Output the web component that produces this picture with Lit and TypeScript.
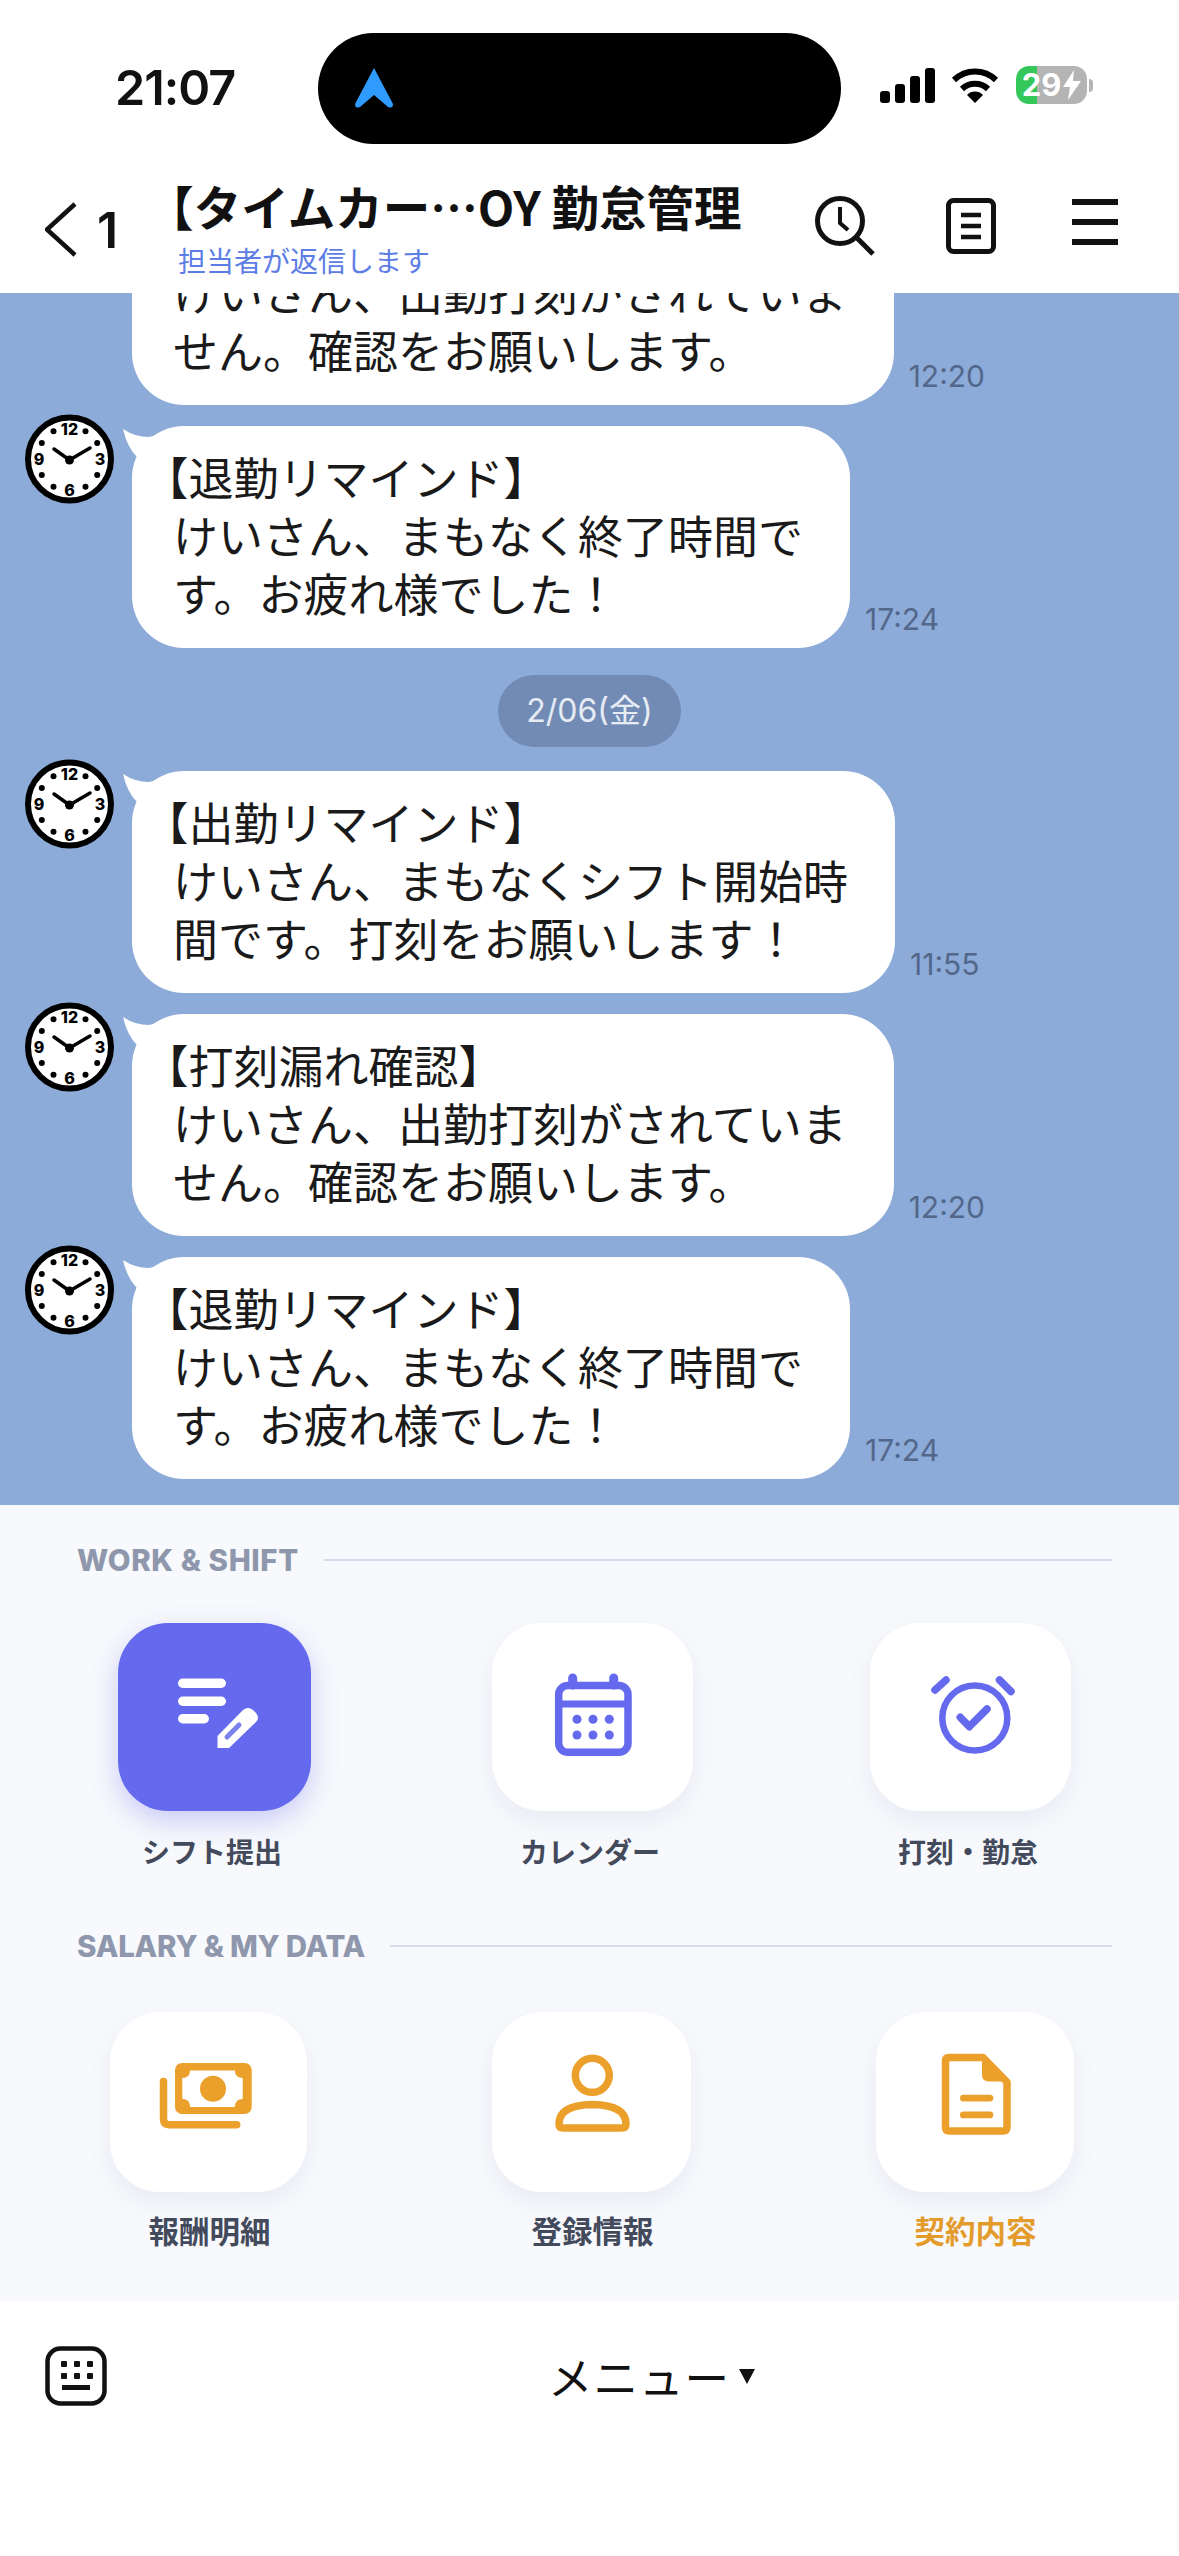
import { LitElement, html, svg, css } from "lit";
import { customElement } from "lit/decorators.js";

interface Message {
  lines: string[];
  time: string;
}

// the oldest message has scrolled under the nav bar, only its tail end is still on screen
const lateScrolled: Message = {
  lines: ["けいさん、出勤打刻がされていま", "せん。確認をお願いします。"],
  time: "12:20",
};
const late: Message = {
  lines: ["【打刻漏れ確認】", "けいさん、出勤打刻がされていま", "せん。確認をお願いします。"],
  time: "12:20",
};
const leave: Message = {
  lines: ["【退勤リマインド】", "けいさん、まもなく終了時間で", "す。お疲れ様でした！"],
  time: "17:24",
};
const start: Message = {
  lines: ["【出勤リマインド】", "けいさん、まもなくシフト開始時", "間です。打刻をお願いします！"],
  time: "11:55",
};

// icons are drawn in tile coordinates, so each one sits where the tile expects it
const shiftIcon = svg`
  <rect x="60" y="55.500" width="48" height="9.500" rx="4.700" fill="#fff" />
  <rect x="60" y="73.500" width="48" height="9.500" rx="4.700" fill="#fff" />
  <rect x="60" y="91" width="31" height="9.500" rx="4.700" fill="#fff" />
  <path d="M99.500 125 V113 L125 87 Q130 83 135 87 L138 90 Q142 95 138 99 L111 125 Z" fill="#fff" />
  <path d="M109 114 L121 102" stroke="#7d82ef" stroke-width="5" stroke-linecap="round" />`;

const calendarIcon = svg`
  <g fill="none" stroke="#6469ee">
    <rect x="66.700" y="62.500" width="69.300" height="66.800" rx="9" stroke-width="7.500" />
    <path d="M80.700 55 V62 M121.700 55 V62" stroke-width="9" stroke-linecap="round" />
    <path d="M67 81 H136" stroke-width="7" />
  </g>
  <g fill="#6469ee">
    ${[85, 101, 117.3].map(
      (x) => svg`<circle cx=${x} cy="96.300" r="4.500" /><circle cx=${x} cy="112" r="4.500" />`
    )}
  </g>`;

const alarmIcon = svg`
  <g fill="none" stroke="#6469ee" stroke-linecap="round" stroke-linejoin="round">
    <circle cx="104.800" cy="95" r="32.500" stroke-width="6.500" />
    <path d="M65 67 L76 57 M129.500 57 L141 68.500" stroke-width="7.500" />
    <path d="M90.300 94.300 L99.300 103.700 L117 86" stroke-width="7.500" />
  </g>`;

const moneyIcon = svg`
  <rect x="65" y="51" width="76.700" height="51" rx="7" fill="#eca02c" />
  <path d="M80 58.500 H125 Q125 66 132.700 66 V87 Q125 87 125 95 H80 Q80 87 72.300 87 V66 Q80 66 80 58.500 Z" fill="#fff" />
  <circle cx="103" cy="76.700" r="13" fill="#eca02c" />
  <path d="M53.500 69.500 V107 Q53.500 112.700 59 112.700 H126.700" fill="none" stroke="#eca02c" stroke-width="7.500" stroke-linecap="round" />`;

const personIcon = svg`
  <g fill="none" stroke="#eca02c" stroke-width="7.500" stroke-linejoin="round">
    <circle cx="100.300" cy="63.300" r="17" />
    <path d="M71 116 H130 Q134 116 134 112 Q134 93 100.300 92.500 Q67 93 67 112 Q67 116 71 116 Z" />
  </g>`;

const docIcon = svg`
  <path d="M73 45.500 H107 L131 70 V115 Q131 119 127 119 H73 Q69.500 119 69.500 115 V49 Q69.500 45.500 73 45.500 Z"
    fill="none" stroke="#eca02c" stroke-width="7.500" stroke-linejoin="round" />
  <path d="M106 44 H109 L132 68 V69.500 H113 Q106 69.500 106 62.500 Z" fill="#eca02c" />
  <rect x="84" y="82.700" width="33.300" height="6.800" rx="3.400" fill="#eca02c" />
  <rect x="84" y="99.500" width="33.300" height="6.800" rx="3.400" fill="#eca02c" />`;

interface Tile {
  label: string;
  icon: unknown;
  width: string;
  active?: boolean;
  accent?: boolean;
}

const workTiles: Tile[] = [
  { label: "シフト提出", icon: shiftIcon, width: "w193", active: true },
  { label: "カレンダー", icon: calendarIcon, width: "w201" },
  { label: "打刻・勤怠", icon: alarmIcon, width: "w201" },
];

const dataTiles: Tile[] = [
  { label: "報酬明細", icon: moneyIcon, width: "w197" },
  { label: "登録情報", icon: personIcon, width: "w199" },
  { label: "契約内容", icon: docIcon, width: "w198", accent: true },
];

@customElement("app-root")
export class AppRoot extends LitElement {
  static styles = css`
    :host {
      display: block;
      width: 1179px;
      height: 2556px;
      overflow: hidden;
      background: #fff;
      font-family: "Noto Sans CJK JP", "Noto Sans", sans-serif;
      color: #111;
    }

    svg {
      display: block;
      flex-shrink: 0;
    }

    .page {
      display: flex;
      flex-direction: column;
      height: 2556px;
    }

    /* status bar */
    .status {
      display: flex;
      align-items: flex-start;
      height: 144px;
      padding-top: 33px;
      box-sizing: border-box;
      flex-shrink: 0;
    }
    .clock {
      width: 318px;
      padding: 24px 0 0 115px;
      box-sizing: border-box;
      font-family: Inter, sans-serif;
      font-weight: 600;
      font-size: 48.5px;
      line-height: 62px;
      letter-spacing: -1px;
    }
    .island {
      display: flex;
      align-items: center;
      width: 523px;
      height: 111px;
      padding-left: 37px;
      box-sizing: border-box;
      border-radius: 56px;
      background: #000;
    }
    .indicators {
      display: flex;
      align-items: center;
      margin-left: 39px;
      height: 111px;
      padding-bottom: 7px;
      box-sizing: border-box;
    }
    .wifi {
      margin-left: 16px;
    }
    .battery {
      display: flex;
      align-items: center;
      justify-content: center;
      gap: 2px;
      width: 71px;
      height: 38px;
      margin-left: 17px;
      border-radius: 13px;
      background: linear-gradient(90deg, #35c759 30%, #b4b4b4 30%);
      color: #fff;
      font-family: Inter, sans-serif;
      font-weight: 700;
      font-size: 31px;
      line-height: 38px;
    }
    .nub {
      width: 4px;
      height: 13px;
      margin-left: 2px;
      border-radius: 0 4px 4px 0;
      background: #b4b4b4;
    }

    /* nav bar */
    .nav {
      display: flex;
      align-items: flex-start;
      height: 149px;
      flex-shrink: 0;
      padding-left: 45px;
      box-sizing: border-box;
      position: relative;
      z-index: 1;
      background: #fff;
    }
    .back {
      margin-top: 58px;
    }
    .count {
      width: 73px;
      margin-left: 20px;
      margin-top: 58px;
      font-family: Inter, sans-serif;
      font-weight: 600;
      font-size: 50px;
      line-height: 56px;
    }
    .heading {
      width: 640px;
      padding-top: 30px;
    }
    .title {
      font-weight: 700;
      font-size: 47.5px;
      line-height: 64px;
      white-space: nowrap;
    }
    .half {
      font-feature-settings: "halt";
    }
    .sub {
      margin: 2px 0 0 8px;
      color: #5d7de6;
      font-size: 28px;
      line-height: 40px;
    }
    .search {
      margin-top: 52px;
      margin-left: 5px;
    }
    .doc {
      margin-top: 54px;
      margin-left: 71px;
    }
    .menu {
      margin-top: 55px;
      margin-left: 76px;
    }

    /* chat */
    .chat {
      display: flex;
      flex-direction: column;
      justify-content: flex-end;
      gap: 21px;
      height: 1212px;
      flex-shrink: 0;
      overflow: hidden;
      padding: 0 0 26px 25px;
      box-sizing: border-box;
      background: #8cabd9;
    }
    .row {
      display: flex;
      align-items: flex-start;
      flex-shrink: 0;
    }
    .avatar {
      margin-top: -12px;
    }
    .spacer {
      width: 90px;
      flex-shrink: 0;
    }
    .bubble {
      position: relative;
      margin-left: 17px;
      padding: 22px 47px 26px 41px;
      border-radius: 52px;
      background: #fff;
      color: #1a1a1a;
      font-size: 45px;
      line-height: 58px;
      white-space: nowrap;
    }
    .bubble .half {
      margin-left: -7px;
    }
    .tail {
      position: absolute;
      left: -9px;
      top: 3px;
    }
    .time {
      align-self: flex-end;
      margin: 0 0 14px 15px;
      color: #53678a;
      font-family: Inter, sans-serif;
      font-size: 30px;
      line-height: 30px;
    }
    .date {
      align-self: center;
      margin: 6px 25px 3px 0;
      padding: 0 28px;
      height: 72px;
      border-radius: 36px;
      background: #718bb4;
      color: #e6ebf4;
      font-family: Inter, "Noto Sans CJK JP", sans-serif;
      font-size: 32px;
      line-height: 72px;
    }

    /* rich menu */
    .panel {
      height: 796px;
      flex-shrink: 0;
      padding-top: 40px;
      box-sizing: border-box;
      background: #f8f9fc;
    }
    .section {
      display: flex;
      align-items: center;
      gap: 25px;
      height: 30px;
      padding: 0 67px 0 77px;
      color: #8f97ad;
      font-family: Inter, sans-serif;
      font-weight: 800;
      font-size: 29.500px;
      line-height: 30px;
      letter-spacing: 0.6px;
      white-space: nowrap;
    }
    .section.second {
      margin-top: 60px;
      letter-spacing: -0.2px;
    }
    .rule {
      flex: 1;
      height: 2px;
      background: #d9dcea;
    }
    .tiles {
      display: grid;
      justify-items: center;
    }
    .tiles.work {
      grid-template-columns: repeat(3, 378px);
      margin-top: 48px;
      padding-left: 25px;
    }
    .tiles.data {
      grid-template-columns: repeat(3, 383px);
      margin-top: 51px;
      padding-left: 17px;
    }
    .item {
      display: flex;
      flex-direction: column;
      align-items: center;
    }
    .tile {
      border-radius: 50px;
      background: #fff;
      box-shadow: 0 10px 26px rgba(92, 100, 170, 0.09);
    }
    .work .tile {
      height: 188px;
    }
    .data .tile {
      height: 180px;
    }
    .tile.on {
      background: #6469ee;
      box-shadow: 0 10px 28px rgba(100, 105, 238, 0.32);
    }
    .w193 {
      width: 193px;
    }
    .w197 {
      width: 197px;
    }
    .w198 {
      width: 198px;
    }
    .w199 {
      width: 199px;
    }
    .w201 {
      width: 201px;
    }
    .label {
      color: #434a5c;
      font-weight: 700;
      line-height: 40px;
      white-space: nowrap;
    }
    .work .label {
      margin-top: 20px;
      padding-right: 4px;
      font-size: 28px;
    }
    .data .label {
      margin-top: 18px;
      padding-left: 2px;
      font-size: 30.500px;
    }
    .label.accent {
      color: #e39b2c;
    }

    /* bottom bar */
    .bar {
      display: flex;
      align-items: center;
      height: 60px;
      margin-top: 45px;
      padding-left: 45px;
    }
    .switch {
      display: flex;
      align-items: center;
      margin-left: 441px;
      font-size: 44.500px;
      line-height: 60px;
      letter-spacing: 1px;
    }
    .caret {
      width: 0;
      height: 0;
      margin-left: 9px;
      border-left: 8.500px solid transparent;
      border-right: 8.500px solid transparent;
      border-top: 15px solid #111;
    }
  `;

  private renderLine(line: string) {
    if (line.startsWith("【")) {
      return html`<div><span class="half">【</span>${line.slice(1)}</div>`;
    }
    return html`<div>${line}</div>`;
  }

  private renderAvatar() {
    const dots = [30, 60, 120, 150, 210, 240, 300, 330];
    return html`<svg class="avatar" width="90" height="90" viewBox="0 0 90 90">
      <circle cx="44.500" cy="45" r="41.500" fill="#fff" stroke="#000" stroke-width="6" />
      ${dots.map((a) => {
        const r = (a * Math.PI) / 180;
        return svg`<circle cx=${44.5 + 32 * Math.sin(r)} cy=${45 - 32 * Math.cos(r)} r="3" fill="#000" />`;
      })}
      <g font-family="Inter, sans-serif" font-weight="800" font-size="16" fill="#000" text-anchor="middle">
        <text x="44.500" y="21">12</text>
        <text x="75" y="51">3</text>
        <text x="44.500" y="82">6</text>
        <text x="14" y="51">9</text>
      </g>
      <path d="M29 35 L44.500 46 L65 34" fill="none" stroke="#000" stroke-width="3.500" stroke-linecap="round" stroke-linejoin="round" />
      <circle cx="44.500" cy="46" r="4.500" fill="#000" />
    </svg>`;
  }

  private renderMessage(m: Message, scrolled = false) {
    return html`<div class="row">
      ${scrolled ? html`<div class="spacer"></div>` : this.renderAvatar()}
      <div class="bubble">
        ${scrolled
          ? ""
          : html`<svg class="tail" width="34" height="30" viewBox="0 0 34 30">
              <path d="M0 0 Q12 8 26 8 L34 6 L14 28 Q4 18 0 0 Z" fill="#fff" />
            </svg>`}
        ${m.lines.map((l) => this.renderLine(l))}
      </div>
      <span class="time">${m.time}</span>
    </div>`;
  }

  private renderTile(t: Tile, height: number) {
    return html`<div class="item">
      <div class="tile ${t.width} ${t.active ? "on" : ""}">
        <svg width="100%" height=${height} viewBox="0 0 ${t.width.slice(1)} ${height}">${t.icon}</svg>
      </div>
      <div class="label ${t.accent ? "accent" : ""}">${t.label}</div>
    </div>`;
  }

  render() {
    return html`<div class="page">
      <div class="status">
        <div class="clock">21:07</div>
        <div class="island">
          <svg width="38" height="41" viewBox="0 0 38 41">
            <path d="M19 0 L38 36 Q38 41 33 39 L19 27 L5 39 Q0 41 0 36 Z" fill="#2f9bff" />
          </svg>
        </div>
        <div class="indicators">
          <svg width="55" height="35" viewBox="0 0 55 35" fill="#000">
            <rect x="0" y="23" width="10" height="12" rx="3" />
            <rect x="15" y="16" width="10" height="19" rx="3" />
            <rect x="30" y="8" width="10" height="27" rx="3" />
            <rect x="45" y="0" width="10" height="35" rx="3" />
          </svg>
          <svg class="wifi" width="48" height="35" viewBox="0 0 48 35" fill="none" stroke="#000" stroke-width="6">
            <path d="M3 12 A30 30 0 0 1 45 12" />
            <path d="M11 21 A19 19 0 0 1 37 21" />
            <path d="M24 35 L16 27 A11 11 0 0 1 32 27 Z" fill="#000" stroke="none" />
          </svg>
          <div class="battery">
            <span>29</span>
            <svg width="18" height="30" viewBox="0 0 18 30">
              <path d="M11 0 L0 17 H7 L5 30 L18 11 H10 Z" fill="#fff" />
            </svg>
          </div>
          <div class="nub"></div>
        </div>
      </div>

      <div class="nav">
        <svg class="back" width="32" height="55" viewBox="0 0 32 55">
          <path d="M30 2 L2 27.500 L30 53" fill="none" stroke="#111" stroke-width="4.500" />
        </svg>
        <div class="count">1</div>
        <div class="heading">
          <div class="title"><span class="half">【</span>タイムカー…OY 勤怠管理</div>
          <div class="sub">担当者が返信します</div>
        </div>
        <svg class="search" width="60" height="60" viewBox="0 0 60 60" fill="none" stroke="#111" stroke-width="5">
          <circle cx="25" cy="25" r="22.500" />
          <path d="M25 11 V27 L33 34" stroke-width="4" />
          <path d="M41 41 L58 58" stroke-width="5" />
        </svg>
        <svg class="doc" width="50" height="56" viewBox="0 0 50 56" fill="none" stroke="#111">
          <rect x="2.500" y="2.500" width="45" height="51" rx="5" stroke-width="5" />
          <path d="M15 17 H35 M15 28 H35 M15 39 H35" stroke-width="4.500" />
        </svg>
        <svg class="menu" width="46" height="46" viewBox="0 0 46 46" stroke="#111" stroke-width="6">
          <path d="M0 3 H46 M0 23 H46 M0 43 H46" />
        </svg>
      </div>

      <div class="chat">
        ${this.renderMessage(lateScrolled, true)} ${this.renderMessage(leave)}
        <div class="date">2/06(金)</div>
        ${this.renderMessage(start)} ${this.renderMessage(late)} ${this.renderMessage(leave)}
      </div>

      <div class="panel">
        <div class="section">WORK &amp; SHIFT<span class="rule"></span></div>
        <div class="tiles work">${workTiles.map((t) => this.renderTile(t, 188))}</div>
        <div class="section second">SALARY &amp; MY DATA<span class="rule"></span></div>
        <div class="tiles data">${dataTiles.map((t) => this.renderTile(t, 180))}</div>
      </div>

      <div class="bar">
        <svg width="62" height="60" viewBox="0 0 62 60">
          <rect x="2.500" y="2.500" width="57" height="55" rx="13" fill="none" stroke="#111" stroke-width="4.500" />
          <g fill="#111">
            ${[16, 29, 42].map(
              (x) => svg`<rect x=${x} y="15" width="6" height="6" rx="1" /><rect x=${x} y="27" width="6" height="6" rx="1" />`
            )}
            <rect x="17" y="39" width="28" height="5" />
          </g>
        </svg>
        <div class="switch">メニュー<span class="caret"></span></div>
      </div>
    </div>`;
  }
}
